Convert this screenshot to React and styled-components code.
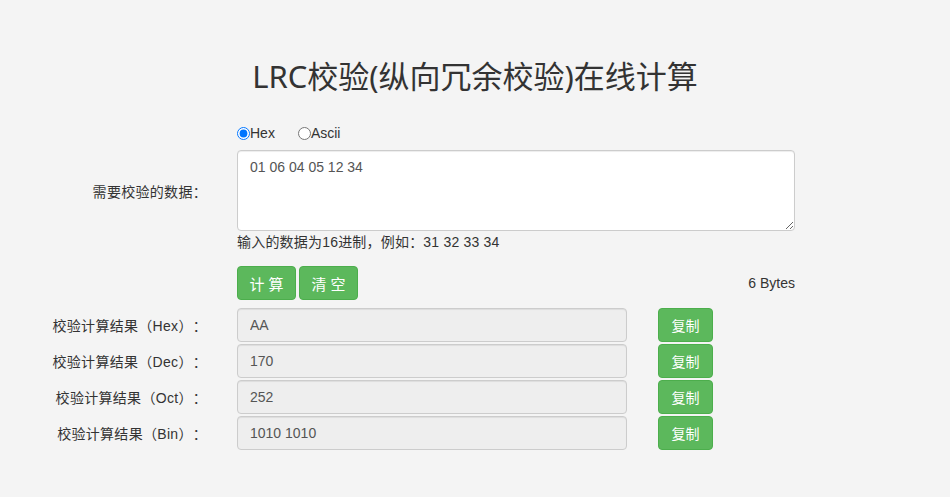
import React from "react";
import styled, { createGlobalStyle } from "styled-components";

const GlobalStyle = createGlobalStyle`
  html, body {
    margin: 0;
    padding: 0;
    background: #f4f4f4;
  }
  body {
    font-family: "Liberation Sans", Arial, "Noto Sans CJK SC", sans-serif;
    font-size: 14px;
    color: #333;
    text-spacing-trim: space-all;
  }
`;

const Page = styled.div`
  width: 950px;
  padding-top: 56px;
`;

const Title = styled.h1`
  margin: 0;
  height: 40px;
  line-height: 40px;
  text-align: center;
  font-family: "Noto Sans", "Noto Sans CJK SC", sans-serif;
  font-size: 31px;
  font-weight: 400;
  color: #333;
`;

const Form = styled.div`
  width: 795px;
  margin-top: 29px;
  display: flex;
  flex-direction: column;
`;

const Row = styled.div`
  display: grid;
  grid-template-columns: 222px 558px;
  column-gap: 15px;
  align-items: ${(p) => (p.$top ? "start" : "center")};
  margin-top: ${(p) => p.$mt || 0}px;
`;

const Label = styled.label`
  padding-right: 15px;
  text-align: right;
  color: #333;
  font-size: 14px;
  letter-spacing: 0.3px;
  padding-top: ${(p) => p.$pt || 0}px;
`;

const RadioGroup = styled.div`
  display: flex;
  align-items: center;
  height: 16px;
`;

const RadioItem = styled.label`
  display: flex;
  align-items: center;
  margin-right: ${(p) => p.$mr || 0}px;
  color: #333;
  input {
    margin: 0;
    width: 13px;
    height: 13px;
  }
`;

const Field = styled.div`
  display: flex;
  flex-direction: column;
`;

const TextArea = styled.textarea`
  box-sizing: border-box;
  width: 558px;
  height: 81px;
  margin-top: 9px;
  padding: 6px 12px;
  border: 1px solid #ccc;
  border-radius: 4px;
  background: #fff;
  color: #555;
  font-family: "Liberation Sans", Arial, sans-serif;
  font-size: 14px;
  line-height: 20px;
  box-shadow: inset 0 1px 1px rgba(0, 0, 0, 0.075);
  outline: none;
`;

const Hint = styled.div`
  margin-top: 2px;
  line-height: 18px;
  letter-spacing: 0.2px;
  color: #333;
`;

const Actions = styled.div`
  display: flex;
  align-items: center;
  gap: 3px;
`;

const Button = styled.button`
  box-sizing: border-box;
  width: ${(p) => p.$w}px;
  height: 34px;
  padding: 0;
  border: 1px solid #4cae4c;
  border-radius: 4px;
  background: #5cb85c;
  color: #fff;
  font-family: "Noto Sans CJK SC", sans-serif;
  font-size: ${(p) => p.$fs || 14}px;
  letter-spacing: ${(p) => p.$ls || 0}px;
  text-indent: ${(p) => p.$ls || 0}px;
  cursor: pointer;
`;

const Bytes = styled.span`
  margin-left: auto;
  color: #333;
`;

const ResultField = styled.div`
  display: flex;
  align-items: center;
  gap: 31px;
`;

const ResultInput = styled.input`
  box-sizing: border-box;
  width: 390px;
  height: 34px;
  padding: 6px 12px;
  border: 1px solid #ccc;
  border-radius: 4px;
  background: #eee;
  color: #555;
  font-family: "Liberation Sans", Arial, sans-serif;
  font-size: 14px;
  box-shadow: inset 0 1px 1px rgba(0, 0, 0, 0.075);
  outline: none;
`;

const results = [
  { name: "Hex", value: "AA" },
  { name: "Dec", value: "170" },
  { name: "Oct", value: "252" },
  { name: "Bin", value: "1010 1010" },
];

const App = () => {
  return (
    <>
      <GlobalStyle />
      <Page>
        <Title>LRC校验(纵向冗余校验)在线计算</Title>
        <Form>
          <Row $top>
            <Label $pt={56}>需要校验的数据：</Label>
            <Field>
              <RadioGroup>
                <RadioItem $mr={23}>
                  <input type="radio" name="mode" defaultChecked />
                  Hex
                </RadioItem>
                <RadioItem>
                  <input type="radio" name="mode" />
                  Ascii
                </RadioItem>
              </RadioGroup>
              <TextArea defaultValue="01 06 04 05 12 34" />
              <Hint>输入的数据为16进制，例如：31 32 33 34</Hint>
            </Field>
          </Row>
          <Row $mt={15}>
            <span />
            <Actions>
              <Button $w={59} $fs={15} $ls={4}>计算</Button>
              <Button $w={59} $fs={15} $ls={4}>清空</Button>
              <Bytes>6 Bytes</Bytes>
            </Actions>
          </Row>
          {results.map((r, i) => (
            <Row key={r.name} $mt={i === 0 ? 8 : 2}>
              <Label>校验计算结果（{r.name}）：</Label>
              <ResultField>
                <ResultInput readOnly value={r.value} />
                <Button $w={55}>复制</Button>
              </ResultField>
            </Row>
          ))}
        </Form>
      </Page>
    </>
  );
};

export default App;
